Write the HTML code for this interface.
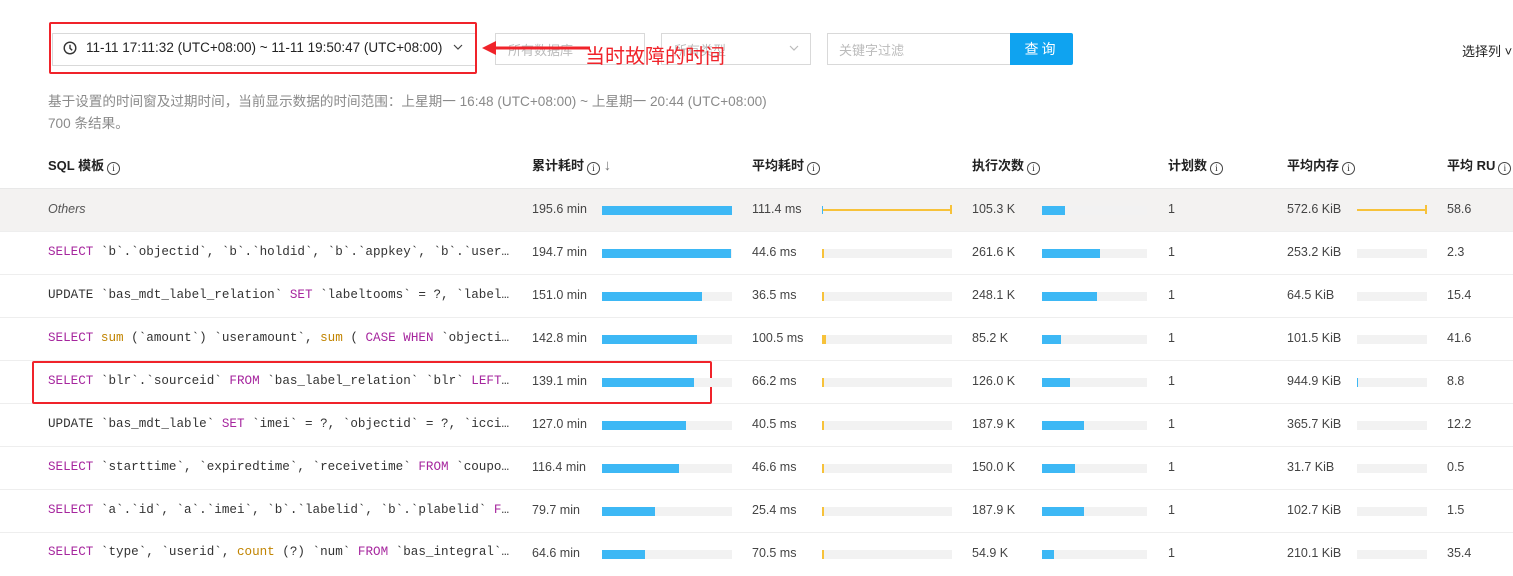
<!DOCTYPE html>
<html><head><meta charset="utf-8"><style>
*{margin:0;padding:0;box-sizing:border-box}
body{width:1513px;height:559px;overflow:hidden;background:#fff;font-family:"Liberation Sans","Noto Sans CJK SC",sans-serif;color:#333;position:relative;font-size:13px}
.a{position:absolute;white-space:nowrap}
.box{position:absolute;border:1px solid #d9d9d9;background:#fff}
.ph{color:#bbb;font-size:13px}
.hdr{font-size:13px;color:#222;font-weight:bold;line-height:16px}
.info{display:inline-block;width:13px;height:13px;border:1.2px solid #444;border-radius:50%;font-size:9px;line-height:11px;text-align:center;font-weight:normal;vertical-align:-1px;margin-left:3px;font-family:"Liberation Serif",serif}
.row{position:absolute;left:0;width:1513px;height:43px;border-bottom:1px solid #eee}
.sql{font-family:"Liberation Mono",monospace;font-size:12.6px;color:#333}
.k{color:#a6269e}.f{color:#c18401}
.num{font-size:12.5px;color:#444}
.bg{position:absolute;height:9px;background:#f2f2f2}
.fill{position:absolute;height:9px;background:#3db8f5}
.y{position:absolute;background:#f7c23a}
</style></head><body>

<div class="box" style="left:52px;top:33px;width:424px;height:33px;border-color:#d9d9d9"></div>
<svg class="a" style="left:63px;top:41px" width="14" height="14" viewBox="0 0 14 14"><circle cx="7" cy="7" r="5.8" fill="none" stroke="#333" stroke-width="1.4"/><path d="M7 3.8V7.3l2.2 2" fill="none" stroke="#333" stroke-width="1.4"/></svg>
<div class="a" style="left:86px;top:40px;font-size:13.5px;color:#222">11-11 17:11:32 (UTC+08:00) ~ 11-11 19:50:47 (UTC+08:00)</div>
<svg class="a" style="left:453px;top:44px" width="10" height="7" viewBox="0 0 10 7"><path d="M1 1l4 4 4-4" fill="none" stroke="#444" stroke-width="1.2"/></svg>
<div class="a" style="left:49px;top:22px;width:428px;height:52px;border:2px solid #f0232a;border-radius:2px"></div>

<div class="box" style="left:495px;top:33px;width:150px;height:32px"></div>
<div class="a ph" style="left:508px;top:40px">所有数据库</div>
<div class="box" style="left:661px;top:33px;width:150px;height:32px"></div>
<div class="a ph" style="left:674px;top:40px">所有类型</div>
<svg class="a" style="left:789px;top:45px" width="10" height="7" viewBox="0 0 10 7"><path d="M1 1l4 4 4-4" fill="none" stroke="#bbb" stroke-width="1.2"/></svg>

<svg class="a" style="left:480px;top:40px" width="112" height="16" viewBox="0 0 112 16"><path d="M110 8H14" stroke="#f0232a" stroke-width="3"/><path d="M2 8l14-7v14z" fill="#f0232a"/></svg>
<div class="a" style="left:585px;top:44px;font-size:20px;color:#f0232a;line-height:26px">当时故障的时间</div>

<div class="box" style="left:827px;top:33px;width:184px;height:32px"></div>
<div class="a ph" style="left:839px;top:40px">关键字过滤</div>
<div class="a" style="left:1010px;top:33px;width:63px;height:32px;background:#0fa3f0;color:#fff;font-size:14px;text-align:center;line-height:32px;border-radius:0 2px 2px 0;letter-spacing:3px">查询</div>
<div class="a" style="left:1462px;top:41px;font-size:13px;color:#222">选择列 ˅</div>

<div class="a" style="left:48px;top:90px;color:#8a8a8a;font-size:13.6px">基于设置的时间窗及过期时间，当前显示数据的时间范围：上星期一 16:48 (UTC+08:00) ~ 上星期一 20:44 (UTC+08:00)</div>
<div class="a" style="left:48px;top:112px;color:#8a8a8a;font-size:13.6px">700 条结果。</div>

<div class="a hdr" style="left:48px;top:158px">SQL 模板<span class="info">i</span></div>
<div class="a hdr" style="left:532px;top:158px">累计耗时<span class="info">i</span> <span style="font-weight:normal;color:#777;font-size:15px">↓</span></div>
<div class="a hdr" style="left:752px;top:158px">平均耗时<span class="info">i</span></div>
<div class="a hdr" style="left:972px;top:158px">执行次数<span class="info">i</span></div>
<div class="a hdr" style="left:1168px;top:158px">计划数<span class="info">i</span></div>
<div class="a hdr" style="left:1287px;top:158px">平均内存<span class="info">i</span></div>
<div class="a hdr" style="left:1447px;top:158px">平均 RU<span class="info">i</span></div>
<div class="a" style="left:0;top:188px;width:1513px;height:1px;background:#e8e8e8"></div>

<div class="row" style="top:189px;background:#f3f2f1"></div>
<div class="row" style="top:232px"></div>
<div class="row" style="top:275px"></div>
<div class="row" style="top:318px"></div>
<div class="row" style="top:361px"></div>
<div class="row" style="top:404px"></div>
<div class="row" style="top:447px"></div>
<div class="row" style="top:490px"></div>
<div class="row" style="top:533px;border:none"></div>

<div class="a" style="left:48px;top:202px;font-style:italic;color:#555;font-size:12.5px">Others</div>
<div class="a sql" style="left:48px;top:245px"><span class="k">SELECT</span> `b`.`objectid`, `b`.`holdid`, `b`.`appkey`, `b`.`user…</div>
<div class="a sql" style="left:48px;top:288px">UPDATE `bas_mdt_label_relation` <span class="k">SET</span> `labeltooms` = ?, `label…</div>
<div class="a sql" style="left:48px;top:331px"><span class="k">SELECT</span> <span class="f">sum</span> (`amount`) `useramount`, <span class="f">sum</span> ( <span class="k">CASE WHEN</span> `objecti…</div>
<div class="a sql" style="left:48px;top:374px"><span class="k">SELECT</span> `blr`.`sourceid` <span class="k">FROM</span> `bas_label_relation` `blr` <span class="k">LEFT</span>…</div>
<div class="a sql" style="left:48px;top:417px">UPDATE `bas_mdt_lable` <span class="k">SET</span> `imei` = ?, `objectid` = ?, `icci…</div>
<div class="a sql" style="left:48px;top:460px"><span class="k">SELECT</span> `starttime`, `expiredtime`, `receivetime` <span class="k">FROM</span> `coupo…</div>
<div class="a sql" style="left:48px;top:503px"><span class="k">SELECT</span> `a`.`id`, `a`.`imei`, `b`.`labelid`, `b`.`plabelid` <span class="k">F</span>…</div>
<div class="a sql" style="left:48px;top:545px"><span class="k">SELECT</span> `type`, `userid`, <span class="f">count</span> (?) `num` <span class="k">FROM</span> `bas_integral`…</div>

<div class="a" style="left:32px;top:361px;width:680px;height:43px;border:2px solid #f0232a;border-radius:2px"></div>

<div id="d"></div>
<script>
var R=[
["195.6 min",130,"111.4 ms","105.3 K",23,"572.6 KiB","58.6"],
["194.7 min",129,"44.6 ms","261.6 K",58,"253.2 KiB","2.3"],
["151.0 min",100,"36.5 ms","248.1 K",55,"64.5 KiB","15.4"],
["142.8 min",95,"100.5 ms","85.2 K",19,"101.5 KiB","41.6"],
["139.1 min",92,"66.2 ms","126.0 K",28,"944.9 KiB","8.8"],
["127.0 min",84,"40.5 ms","187.9 K",42,"365.7 KiB","12.2"],
["116.4 min",77,"46.6 ms","150.0 K",33,"31.7 KiB","0.5"],
["79.7 min",53,"25.4 ms","187.9 K",42,"102.7 KiB","1.5"],
["64.6 min",43,"70.5 ms","54.9 K",12,"210.1 KiB","35.4"]];
var h="";
R.forEach(function(r,i){
 var c=210+i*43, t=c-8, b=c-4;
 h+='<div class="a num" style="left:532px;top:'+t+'px">'+r[0]+'</div>';
 h+='<div class="bg" style="left:602px;top:'+b+'px;width:130px"></div><div class="fill" style="left:602px;top:'+b+'px;width:'+r[1]+'px"></div>';
 h+='<div class="a num" style="left:752px;top:'+t+'px">'+r[2]+'</div>';
 if(i==0){h+='<div class="y" style="left:822px;top:'+(c-1)+'px;width:130px;height:2px"></div><div class="y" style="left:950px;top:'+(c-5)+'px;width:2px;height:9px"></div><div class="a" style="left:822px;top:'+(c-4)+'px;width:1px;height:8px;background:#3db8f5"></div>';}
 else{h+='<div class="bg" style="left:822px;top:'+b+'px;width:130px"></div><div class="y" style="left:822px;top:'+b+'px;width:'+(i==3?4:2)+'px;height:9px"></div>';}
 h+='<div class="a num" style="left:972px;top:'+t+'px">'+r[3]+'</div>';
 h+='<div class="bg" style="left:1042px;top:'+b+'px;width:105px"></div><div class="fill" style="left:1042px;top:'+b+'px;width:'+r[4]+'px"></div>';
 h+='<div class="a num" style="left:1168px;top:'+t+'px">1</div>';
 h+='<div class="a num" style="left:1287px;top:'+t+'px">'+r[5]+'</div>';
 if(i==0){h+='<div class="y" style="left:1357px;top:'+(c-1)+'px;width:70px;height:2px"></div><div class="y" style="left:1425px;top:'+(c-5)+'px;width:2px;height:9px"></div>';}
 else{h+='<div class="bg" style="left:1357px;top:'+b+'px;width:70px"></div>'; if(i==4)h+='<div class="fill" style="left:1357px;top:'+b+'px;width:1px"></div>';}
 h+='<div class="a num" style="left:1447px;top:'+t+'px">'+r[6]+'</div>';
});
document.getElementById('d').innerHTML=h;
</script>
</body></html>
